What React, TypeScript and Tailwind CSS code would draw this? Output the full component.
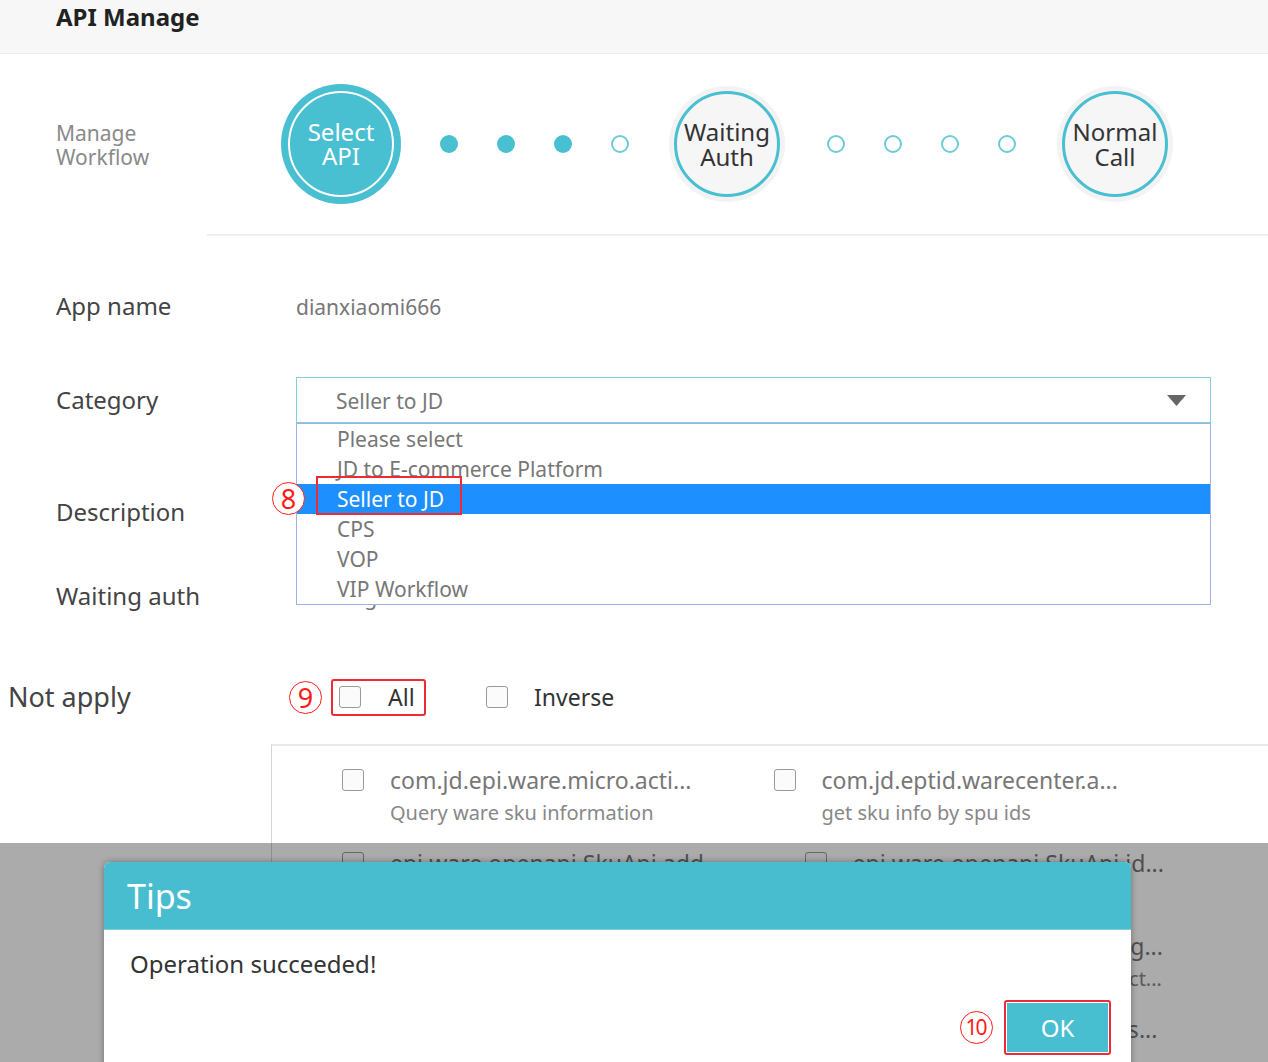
import React from 'react'

function Dot({ filled }: { filled?: boolean }) {
  if (filled) return <span className="block w-[18px] h-[18px] rounded-full bg-[#49bfd2]" />
  return <span className="block w-[18px] h-[18px] rounded-full border-2 border-[#6ccbd9] bg-white" />
}

function Step({ top, bottom }: { top: string; bottom: string }) {
  return (
    <div className="w-[116px] h-[116px] rounded-full bg-[#f3f3f3] flex items-center justify-center">
      <div className="w-[106px] h-[106px] rounded-full border-[3px] border-[#49bfd2] bg-[#f6f6f6] flex flex-col items-center justify-center text-[24px] leading-[25px] text-[#333]">
        <span>{top}</span>
        <span>{bottom}</span>
      </div>
    </div>
  )
}

function Marker({ n, small }: { n: string; small?: boolean }) {
  return (
    <span
      className={`flex w-[33px] h-[33px] shrink-0 items-center justify-center rounded-full border-[1.5px] border-[#ff1a1a] bg-white text-[#ff1a1a] leading-none ${
        small ? 'text-[21px] tracking-[-2px] pr-[2px]' : 'text-[27px]'
      }`}
    >
      {n}
    </span>
  )
}

function Box() {
  return <span className="block w-[22px] h-[22px] shrink-0 rounded-[3px] border-[1.5px] border-[#9a9a9a] bg-[#fbfbfb]" />
}

const categories = ['Please select', 'JD to E-commerce Platform', 'Seller to JD', 'CPS', 'VOP', 'VIP Workflow']

// api 목록 (두 칸씩)
const apiRows = [
  [
    { name: 'com.jd.epi.ware.micro.acti...', desc: 'Query ware sku information' },
    { name: 'com.jd.eptid.warecenter.a...', desc: 'get sku info by spu ids' },
  ],
  [
    { name: 'epi.ware.openapi.SkuApi.add...', desc: 'add sku information' },
    { name: 'epi.ware.openapi.SkuApi.id...', desc: 'update sku' },
  ],
  [
    { name: 'epi.ware.openapi.WareApi.u...', desc: 'update ware information' },
    { name: 'epi.ware.openapi.Sku.listing...', desc: 'get sku sales info of this product...' },
  ],
  [
    { name: 'epi.ware.openapi.SkuApi.q...', desc: 'query sku stock' },
    { name: 'epi.ware.openapi.WareApi.its...', desc: 'get images' },
  ],
]

export default function App() {
  return (
    <div className="relative w-[1268px] h-[1062px] overflow-hidden bg-white font-['Noto_Sans',sans-serif]">
      {/* 헤더 */}
      <div className="h-[54px] bg-[#f7f7f7] border-b border-[#ececec] pl-[56px] pt-[1px]">
        <h1 className="text-[24px] font-bold text-[#222] leading-[32px]">API Manage</h1>
      </div>

      {/* 워크플로우 */}
      <div className="flex items-center h-[180px]">
        <div className="w-[281px] pl-[56px] text-[21px] leading-[24px] text-[#8a8a8a] pt-[2px]">
          <div>Manage</div>
          <div>Workflow</div>
        </div>
        <div className="w-[120px] h-[120px] rounded-full bg-[#49bfd2] flex items-center justify-center">
          <div className="w-[106px] h-[106px] rounded-full border-2 border-white flex flex-col items-center justify-center text-white text-[24px] leading-[24px]">
            <span>Select</span>
            <span>API</span>
          </div>
        </div>
        <div className="flex items-center gap-[39px] ml-[39px]">
          <Dot filled />
          <Dot filled />
          <Dot filled />
          <Dot />
        </div>
        <div className="ml-[40px]">
          <Step top="Waiting" bottom="Auth" />
        </div>
        <div className="flex items-center gap-[39px] ml-[42px]">
          <Dot />
          <Dot />
          <Dot />
          <Dot />
        </div>
        <div className="ml-[41px]">
          <Step top="Normal" bottom="Call" />
        </div>
      </div>
      <div className="ml-[207px] border-t-2 border-[#f0f0f0]" />

      {/* 폼 */}
      <div className="flex items-center h-[46px] mt-[47px]">
        <div className="w-[296px] pl-[56px] text-[24px] text-[#444]">App name</div>
        <div className="text-[21px] text-[#777] pt-[3px]">dianxiaomi666</div>
      </div>

      <div className="flex items-center h-[46px] mt-[48px]">
        <div className="w-[296px] pl-[56px] text-[24px] text-[#444]">Category</div>
        <div className="relative w-[915px] h-[46px] border border-[#7fd3df] flex items-center justify-between pl-[39px] pr-[24px]">
          <span className="text-[21px] text-[#777] pt-[3px]">Seller to JD</span>
          <svg width="19" height="11" viewBox="0 0 19 11">
            <path d="M0 0 H19 L9.5 11 Z" fill="#666" />
          </svg>

          {/* 드롭다운 목록 */}
          <div className="absolute left-[-1px] top-[45px] w-[915px] border border-[#9db3e6] bg-white z-20">
            {categories.map((c) => (
              <div
                key={c}
                className={`h-[30px] flex items-center pl-[40px] text-[21px] leading-none ${
                  c === 'Seller to JD' ? 'bg-[#1e8fff] text-white' : 'text-[#777]'
                }`}
              >
                {c}
              </div>
            ))}
            <div className="absolute left-[19px] top-[52px] w-[146px] h-[39px] border-2 border-[#ee2b34]" />
            <div className="absolute left-[-25px] top-[58px]">
              <Marker n="8" />
            </div>
          </div>
        </div>
      </div>

      <div className="flex items-center h-[46px] mt-[66px]">
        <div className="w-[296px] pl-[56px] text-[24px] text-[#444]">Description</div>
      </div>

      <div className="flex items-center h-[46px] mt-[38px]">
        <div className="w-[296px] pl-[56px] text-[24px] text-[#444]">Waiting auth</div>
        <div className="text-[21px] text-[#777] pl-[6px] pt-[4px]">Waiting</div>
      </div>

      <div className="flex items-center h-[46px] mt-[55px]">
        <div className="w-[289px] pl-[8px] text-[27px] text-[#444]">Not apply</div>
        <Marker n="9" />
        <div className="ml-[9px] w-[95px] h-[37px] border-2 border-[#ee2b34] rounded-[3px] flex items-center pl-[6px]">
          <Box />
          <span className="ml-[27px] text-[23px] text-[#333]">All</span>
        </div>
        <div className="ml-[60px] flex items-center">
          <Box />
          <span className="ml-[26px] text-[23px] text-[#333]">Inverse</span>
        </div>
      </div>

      {/* API 목록 */}
      <div className="ml-[271px] mt-[24px] h-[400px] border-t-2 border-l border-t-[#e8e8e8] border-l-[#d6d6d6] pl-[70px] pt-[19px] flex flex-col gap-[17px]">
        {apiRows.map((row, i) => (
          <div key={i} className="flex">
            {row.map((api) => (
              <div key={api.name} className="flex mr-[82px] whitespace-nowrap">
                <div className="pt-[4px]">
                  <Box />
                </div>
                <div className="ml-[26px]">
                  <div className="text-[23px] leading-[30px] text-[#777]">{api.name}</div>
                  <div className="text-[20px] leading-[36px] text-[#888]">{api.desc}</div>
                </div>
              </div>
            ))}
          </div>
        ))}
      </div>

      {/* 모달 */}
      <div className="absolute left-0 right-0 top-[843px] bottom-0 bg-black/[0.33] z-30" />
      <div className="absolute left-[104px] top-[862px] w-[1027px] h-[240px] bg-white rounded-t-[6px] shadow-[0_0_6px_rgba(0,0,0,0.35)] z-40">
        <div className="h-[68px] bg-[#48bdd0] rounded-t-[6px] flex items-center pl-[23px] border-b border-[#7fd3df]">
          <span className="text-[34px] text-white leading-none">Tips</span>
        </div>
        <div className="pl-[26px] pt-[19px] text-[24px] text-[#333] leading-[30px]">Operation succeeded!</div>
        <div className="absolute right-[20px] top-[138px] flex items-center">
          <Marker n="10" small />
          <div className="ml-[11px] w-[107px] h-[55px] border-2 border-[#ee2b34] rounded-[3px] p-px">
            <div className="w-full h-full bg-[#48bfd1] flex items-center justify-center text-[24px] text-white">OK</div>
          </div>
        </div>
      </div>
    </div>
  )
}
